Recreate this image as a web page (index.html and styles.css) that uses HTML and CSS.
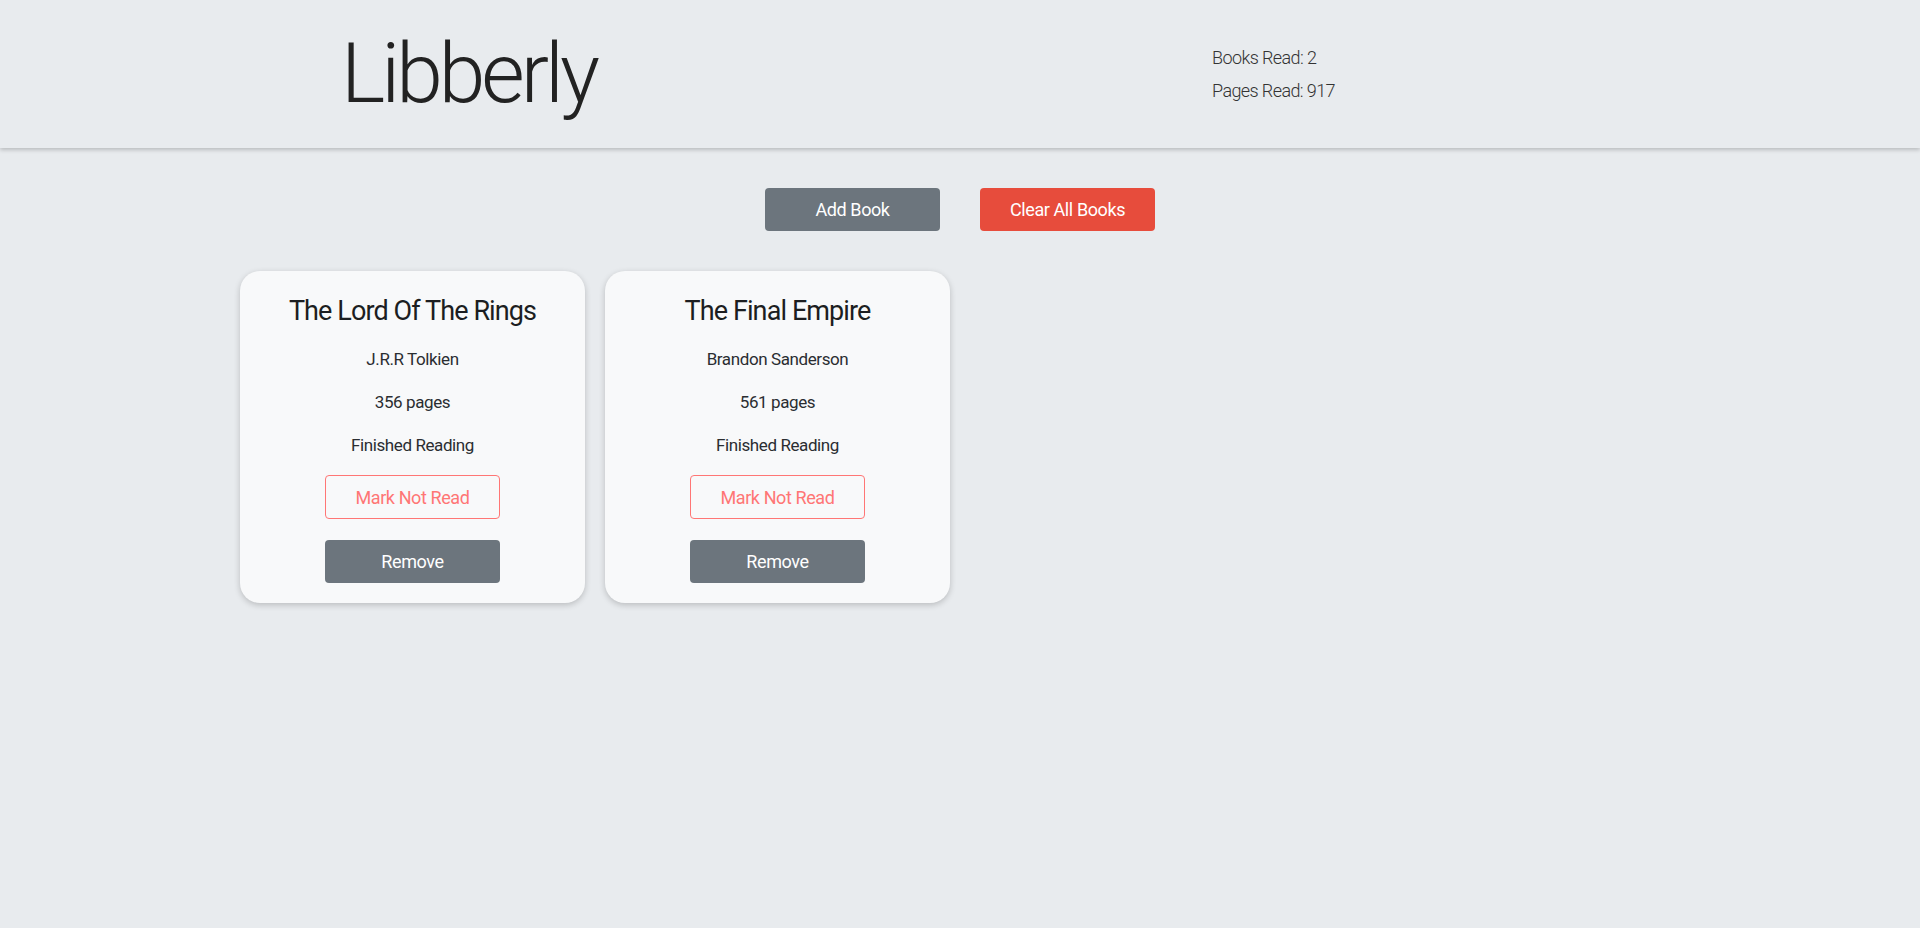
FILE: index.html
```html
<!DOCTYPE html>
<html lang="en">
<head>
<meta charset="utf-8">
<title>Libberly</title>
<link rel="stylesheet" href="styles.css">
</head>
<body>
<header class="site-header">
  <h1 class="logo">Libberly</h1>
  <div class="stats">
    <p class="stat">Books Read: 2</p>
    <p class="stat">Pages Read: 917</p>
  </div>
</header>
<main class="content">
  <div class="actions">
    <button class="btn btn-gray">Add Book</button>
    <button class="btn btn-red">Clear All Books</button>
  </div>
  <section class="library">
    <article class="card">
      <h2 class="card-title">The Lord Of The Rings</h2>
      <p class="card-line">J.R.R Tolkien</p>
      <p class="card-line">356 pages</p>
      <p class="card-line">Finished Reading</p>
      <button class="btn btn-outline">Mark Not Read</button>
      <button class="btn btn-gray">Remove</button>
    </article>
    <article class="card">
      <h2 class="card-title">The Final Empire</h2>
      <p class="card-line">Brandon Sanderson</p>
      <p class="card-line">561 pages</p>
      <p class="card-line">Finished Reading</p>
      <button class="btn btn-outline">Mark Not Read</button>
      <button class="btn btn-gray">Remove</button>
    </article>
  </section>
</main>
</body>
</html>
```

FILE: styles.css
```css
* { box-sizing: border-box; }
html, body { margin: 0; padding: 0; }
body {
  background: #e8ebee;
  font-family: Roboto, "Noto Sans", sans-serif;
  color: #212529;
  min-height: 928px;
}
.site-header {
  height: 148px;
  display: grid;
  grid-template-columns: 871px auto;
  align-items: center;
  padding-left: 341px;
  box-shadow: 0 2px 4px rgba(0,0,0,0.2);
}
.logo {
  margin: 0;
  font-weight: 300;
  font-size: 84px;
  line-height: 1;
  letter-spacing: -4px;
  color: #222;
  white-space: nowrap;
}
.stat {
  margin: 0;
  font-size: 18px;
  line-height: 33px;
  letter-spacing: -0.6px;
  color: #333;
  font-weight: 300;
}
.content {
  width: 1440px;
  margin: 0 auto;
  padding-top: 40px;
}
.actions {
  display: flex;
  justify-content: center;
  gap: 40px;
}
.btn {
  width: 175px;
  height: 43px;
  border: none;
  border-radius: 4px;
  font-family: inherit;
  font-size: 18px;
  letter-spacing: -0.4px;
  cursor: pointer;
  padding: 0;
}
.btn-gray { background: #6c757d; color: #fff; }
.btn-red { background: #e74c3c; color: #fff; }
.btn-outline {
  background: transparent;
  color: #ff7675;
  border: 1px solid #ff7675;
  height: 44px;
}
.library {
  margin-top: 40px;
  display: grid;
  grid-template-columns: repeat(4, 1fr);
  gap: 20px;
}
.card {
  background: #f8f9fa;
  border-radius: 20px;
  box-shadow: 0 2px 6px rgba(0,0,0,0.2);
  display: flex;
  flex-direction: column;
  align-items: center;
  padding: 20px 20px 20px;
}
.card-title {
  margin: 0;
  font-weight: 400;
  font-size: 27px;
  line-height: 40px;
  letter-spacing: -0.9px;
  color: #1c1e21;
}
.card-line {
  margin: 0;
  font-size: 17px;
  line-height: 43px;
  letter-spacing: -0.4px;
  color: #2a2d31;
}
.card-title + .card-line { margin-top: 7px; }
.card .btn-outline { margin-top: 8px; }
.card .btn-gray { margin-top: 21px; }
```
